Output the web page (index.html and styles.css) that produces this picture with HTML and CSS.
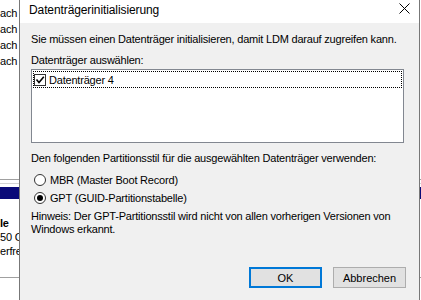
FILE: index.html
```html
<!DOCTYPE html>
<html lang="de">
<head>
<meta charset="UTF-8">
<title>Datenträgerinitialisierung</title>
<link rel="stylesheet" href="styles.css">
</head>
<body>
<div class="desktop">
<!-- Disk management window behind the dialog -->
<div class="backdrop">
<div class="bg-list">
<div class="bg-row">ach</div>
<div class="bg-row">ach</div>
<div class="bg-row">ach</div>
<div class="bg-row">ach</div>
</div>
<div class="bg-sep"></div>
<div class="bg-sep light"></div>
<div class="bg-selected"></div>
<div class="bg-info">
<div class="bg-line bold">le</div>
<div class="bg-line">50 G</div>
<div class="bg-line">erfre</div>
</div>
<div class="bg-sep bottom"></div>
</div>

<div class="dialog">
<div class="titlebar">
<span class="title">Datenträgerinitialisierung</span>
<svg class="close" width="11" height="11" viewBox="0 0 11 11">
<path d="M0.5 0.5 L10.5 10.5 M10.5 0.5 L0.5 10.5" stroke="#000" stroke-width="1" fill="none"/>
</svg>
</div>
<div class="content">
<p class="intro">Sie müssen einen Datenträger initialisieren, damit LDM darauf zugreifen kann.</p>
<div class="field-label">Datenträger auswählen:</div>
<div class="listbox">
<div class="list-item">
<span class="check">
<svg width="10" height="10" viewBox="0 0 10 10"><path d="M1.5 4.5 L4 7.5 L8.8 1.8" stroke="#000" stroke-width="1.6" fill="none"/></svg>
</span>
<span>Datenträger 4</span>
</div>
</div>
<div class="style-label">Den folgenden Partitionsstil für die ausgewählten Datenträger verwenden:</div>
<div class="radio-group">
<div class="radio-row"><span class="radio"></span>MBR (Master Boot Record)</div>
<div class="radio-row"><span class="radio checked"></span>GPT (GUID-Partitionstabelle)</div>
</div>
<p class="hint">Hinweis: Der GPT-Partitionsstil wird nicht von allen vorherigen Versionen von<br>Windows erkannt.</p>
<div class="buttons">
<button type="button" class="btn btn-default">OK</button>
<button type="button" class="btn">Abbrechen</button>
</div>
</div>
</div>
</div>
</body>
</html>
```
FILE: styles.css
```css
body {
margin: 0;
font-family: "Liberation Sans", Arial, sans-serif;
font-size: 11px;
letter-spacing: -0.2px;
color: #000;
background-color: #fff;
}
.desktop {
position: relative;
width: 421px;
height: 300px;
overflow: hidden;
}
/* background window */
.backdrop {
padding-top: 5px;
}
.bg-row {
height: 16px;
line-height: 16px;
white-space: nowrap;
}
.bg-sep {
height: 1px;
background-color: #a0a0a0;
margin-top: 110px;
}
.bg-sep.light {
background-color: #d4d4d4;
margin-top: 3px;
}
.bg-sep.bottom {
margin-top: 19px;
}
.bg-selected {
height: 12px;
margin-top: 3px;
background-color: #0a0a78;
}
.bg-info {
padding-top: 17px;
}
.bg-line {
height: 14px;
line-height: 14px;
white-space: nowrap;
}
.bold {
font-weight: bold;
}
/* dialog */
.dialog {
position: absolute;
left: 19px;
top: 0;
width: 401px;
height: 320px;
box-sizing: border-box;
border: 1px solid #777;
border-top: none;
background-color: #f0f0f0;
}
.titlebar {
height: 23px;
background-color: #fff;
display: flex;
justify-content: space-between;
align-items: flex-start;
}
.title {
font-size: 12px;
letter-spacing: -0.1px;
line-height: 20px;
padding-left: 9px;
}
.close {
margin: 3px 9px 0 0;
}
.content {
padding: 10px 0 0 11px;
}
.intro,
.hint {
margin: 0;
line-height: 13px;
}
.field-label {
margin-top: 8px;
line-height: 13px;
}
.listbox {
margin-top: 2px;
width: 373px;
height: 74px;
box-sizing: border-box;
border: 1px solid #828790;
background-color: #fff;
padding: 1px;
}
.list-item {
height: 17px;
box-sizing: border-box;
border: 1px dotted #000;
display: flex;
align-items: center;
gap: 3px;
}
.check {
width: 12px;
height: 12px;
box-sizing: border-box;
border: 1px solid #333;
background-color: #fff;
display: flex;
align-items: center;
justify-content: center;
}
.style-label {
margin-top: 9px;
line-height: 13px;
}
.radio-group {
margin-top: 6px;
}
.radio-row {
height: 18px;
display: flex;
align-items: center;
gap: 4px;
padding-left: 3px;
}
.radio {
width: 12px;
height: 12px;
box-sizing: border-box;
border: 1px solid #333;
border-radius: 50%;
background-color: #fff;
display: flex;
align-items: center;
justify-content: center;
}
.radio.checked::after {
content: "";
width: 6px;
height: 6px;
border-radius: 50%;
background-color: #000;
}
.hint {
margin-top: 3px;
}
.buttons {
margin-top: 31px;
display: flex;
justify-content: flex-end;
gap: 11px;
padding-right: 13px;
}
.btn {
width: 73px;
height: 21px;
padding: 0;
font: inherit;
color: #000;
background-color: #e1e1e1;
border: 1px solid #adadad;
}
.btn-default {
border: 2px solid #0078d7;
}
```
